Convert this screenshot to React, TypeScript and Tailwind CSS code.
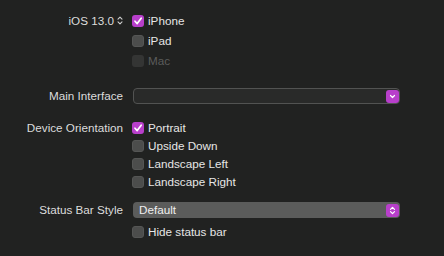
import React from "react";

const Check = ({ checked, disabled }: { checked?: boolean; disabled?: boolean }) => (
  <div
    className={
      "w-[12px] h-[12px] rounded-[3px] flex items-center justify-center shrink-0 " +
      (checked ? "bg-[#b83fcb]" : disabled ? "bg-[#343534]" : "bg-[#4c4d4c] border border-[#555655]")
    }
  >
    {checked && (
      <svg width="10" height="10" viewBox="0 0 10 10">
        <path d="M2 5.2 L4.2 7.6 L8.2 2.2" fill="none" stroke="white" strokeWidth="1.7" strokeLinecap="round" strokeLinejoin="round" />
      </svg>
    )}
  </div>
);

const CheckRow = ({ label, checked, disabled, h }: { label: string; checked?: boolean; disabled?: boolean; h: string }) => (
  <div className={"flex items-center " + h}>
    <div className="w-[132px]" />
    <Check checked={checked} disabled={disabled} />
    <span className={"ml-[4px] " + (disabled ? "text-[#5b5c5b]" : "text-[#e6e6e6]")}>{label}</span>
  </div>
);

export default function App() {
  return (
    <div
      className="w-[444px] h-[256px] bg-[#212221] text-[11.7px] leading-none overflow-hidden"
      style={{ fontFamily: '"Liberation Sans", Arial, sans-serif' }}
    >
      <div className="flex flex-col pt-[11px]">
        <div className="flex items-center h-[20px]">
          <div className="w-[123px] flex justify-end items-center text-[#dcdcdc]">
            <span>iOS 13.0</span>
            <svg className="ml-[3px]" width="6" height="9" viewBox="0 0 6 9">
              <path d="M1 3.2 L3 1.2 L5 3.2 M1 5.8 L3 7.8 L5 5.8" fill="none" stroke="#cfcfcf" strokeWidth="1.1" strokeLinecap="round" strokeLinejoin="round" />
            </svg>
          </div>
          <div className="w-[9px]" />
          <Check checked />
          <span className="ml-[4px] text-[#e6e6e6]">iPhone</span>
        </div>
        <CheckRow label="iPad" h="h-[20px]" />
        <CheckRow label="Mac" disabled h="h-[20px]" />

        <div className="flex items-center mt-[17px] h-[16px]">
          <div className="w-[123px] text-right text-[#dcdcdc]">Main Interface</div>
          <div className="ml-[10px] w-[267px] h-[16px] rounded-[4px] border border-[#525352] bg-[#292a29] flex items-center justify-end">
            <div className="w-[13px] h-[13px] rounded-[3px] bg-[#b83fcb] flex items-center justify-center">
              <svg width="7" height="5" viewBox="0 0 7 5">
                <path d="M1.5 1.5 L3.5 3.5 L5.5 1.5" fill="none" stroke="white" strokeWidth="1.2" strokeLinecap="round" strokeLinejoin="round" />
              </svg>
            </div>
          </div>
        </div>

        <div className="flex items-center mt-[15px] h-[18px]">
          <div className="w-[123px] text-right text-[#dcdcdc]">Device Orientation</div>
          <div className="w-[9px]" />
          <Check checked />
          <span className="ml-[4px] text-[#e6e6e6]">Portrait</span>
        </div>
        <CheckRow label="Upside Down" h="h-[18px]" />
        <CheckRow label="Landscape Left" h="h-[18px]" />
        <CheckRow label="Landscape Right" h="h-[18px]" />

        <div className="flex items-center mt-[11px] h-[16px]">
          <div className="w-[123px] text-right text-[#dcdcdc]">Status Bar Style</div>
          <div className="ml-[10px] w-[267px] h-[16px] rounded-[4px] bg-[#5b5c5b] flex items-center justify-between pl-[6px] pr-[1px]">
            <span className="text-[#efefef]">Default</span>
            <div className="w-[13px] h-[13px] rounded-[3px] bg-[#b83fcb] flex items-center justify-center">
              <svg width="7" height="9" viewBox="0 0 7 9">
                <path d="M1.5 3.3 L3.5 1.3 L5.5 3.3 M1.5 5.7 L3.5 7.7 L5.5 5.7" fill="none" stroke="white" strokeWidth="1.2" strokeLinecap="round" strokeLinejoin="round" />
              </svg>
            </div>
          </div>
        </div>
        <div className="mt-[5px]">
          <CheckRow label="Hide status bar" h="h-[18px]" />
        </div>
      </div>
    </div>
  );
}
